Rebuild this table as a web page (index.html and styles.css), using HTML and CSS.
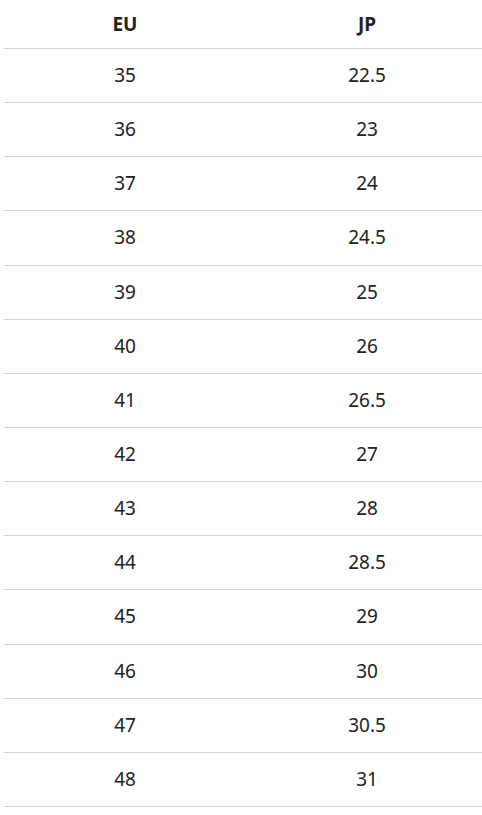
FILE: index.html
```html
<!DOCTYPE html>
<html>
<head>
<meta charset="utf-8">
<link rel="stylesheet" href="styles.css">
</head>
<body>
<table class="size-table">
  <thead>
    <tr><th>EU</th><th>JP</th></tr>
  </thead>
  <tbody>
    <tr><td>35</td><td>22.5</td></tr>
    <tr><td>36</td><td>23</td></tr>
    <tr><td>37</td><td>24</td></tr>
    <tr><td>38</td><td>24.5</td></tr>
    <tr><td>39</td><td>25</td></tr>
    <tr><td>40</td><td>26</td></tr>
    <tr><td>41</td><td>26.5</td></tr>
    <tr><td>42</td><td>27</td></tr>
    <tr><td>43</td><td>28</td></tr>
    <tr><td>44</td><td>28.5</td></tr>
    <tr><td>45</td><td>29</td></tr>
    <tr><td>46</td><td>30</td></tr>
    <tr><td>47</td><td>30.5</td></tr>
    <tr><td>48</td><td>31</td></tr>
  </tbody>
</table>
</body>
</html>
```
FILE: styles.css
```css
html, body {
  margin: 0;
  padding: 0;
  background: #fff;
  overflow: hidden;
}
body {
  font-family: "Noto Sans", "Noto Sans CJK JP", sans-serif;
  color: #222;
}
.size-table {
  margin-left: 4px;
  width: 484px;
  border-collapse: collapse;
  table-layout: fixed;
}
.size-table th,
.size-table td {
  text-align: center;
  border-bottom: 1px solid #d4d4d4;
  padding: 0;
  font-size: 19px;
  line-height: 1;
}
.size-table th {
  height: 48px;
  font-weight: bold;
}
.size-table td {
  height: 53.15px;
  font-weight: normal;
}
```
